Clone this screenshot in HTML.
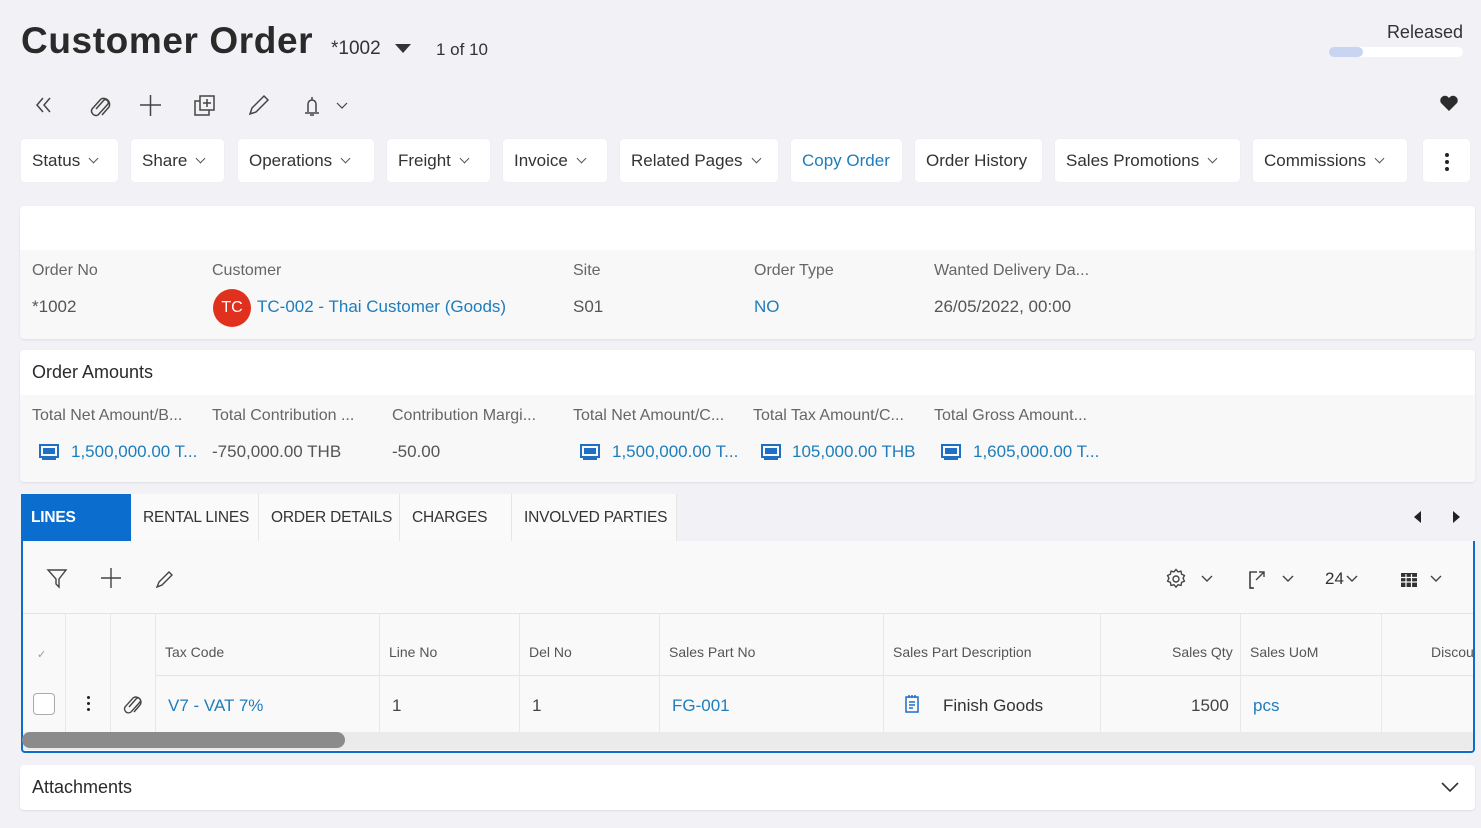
<!DOCTYPE html><html><head><meta charset="utf-8"><style>
*{box-sizing:border-box;margin:0;padding:0}
body{width:1481px;height:828px;background:#f2f1f5;font-family:"Liberation Sans",sans-serif;color:#333;position:relative;overflow:hidden;font-size:16px}
.a{position:absolute;white-space:nowrap}
.btn{position:absolute;top:139px;height:43px;background:#fff;border-radius:4px;line-height:43px;padding-left:11px;font-size:17px;color:#333;box-shadow:0 0 1px rgba(0,0,0,.08)}
.chev{display:inline-block;width:7px;height:7px;border-right:1.3px solid #555;border-bottom:1.3px solid #555;transform:rotate(45deg);margin-left:10px;position:relative;top:-4px}
.card{position:absolute;left:20px;width:1455px;background:#fff;border-radius:4px;box-shadow:0 1px 2px rgba(0,0,0,.08)}
.lbl{color:#666;font-size:16px}
.val{color:#555;font-size:17px}
.lnk{color:#1f7dbb !important;font-size:17px}
.tab{position:absolute;top:494px;height:47px;line-height:47px;font-size:15.5px;background:#fafafa;color:#333;padding-left:12px;border-right:1px solid #e6e6e6;letter-spacing:-0.2px}
.vl{position:absolute;top:614px;height:118px;width:1px;background:#e8e8e8}
.th{position:absolute;top:644px;font-size:14px;color:#555}
.td{position:absolute;top:696px;font-size:17px;color:#444}
</style></head><body>
<div class="a" style="left:21px;top:20px;font-size:37px;font-weight:bold;color:#2a2a2a;letter-spacing:0.6px">Customer Order</div>
<div class="a" style="left:331px;top:38px;font-size:19px;color:#333">*1002</div>
<div class="a" style="left:395px;top:44px;width:0;height:0;border-left:8px solid transparent;border-right:8px solid transparent;border-top:9px solid #333"></div>
<div class="a" style="left:436px;top:40px;font-size:17px;color:#333">1 of 10</div>
<div class="a" style="right:18px;top:22px;font-size:18px;color:#333">Released</div>
<div class="a" style="left:1329px;top:47px;width:134px;height:10px;background:#fff;border-radius:5px"><div style="width:34px;height:10px;background:#c8d4f2;border-radius:5px"></div></div>
<svg class="a" style="left:30px;top:90px" width="330" height="30" fill="none" stroke="#444" stroke-width="1.5">
<path d="M13 8l-6 7 6 7M20 8l-6 7 6 7"/>
<path d="M66 19l8-9a3 3 0 0 1 4 4l-10 11a4.5 4.5 0 0 1-6-6l9-10a6 6 0 0 1 8 8l-7 8"/>
<path d="M110 15h21M120.5 5v21"/>
<rect x="165" y="11" width="14" height="14"/><rect x="170" y="6" width="14" height="14" fill="#f2f1f5"/><path d="M177 9v8M173 13h8"/>
<path d="M220 24l2-6 12-12 4 4-12 12z"/>
<path d="M275 23h14M278 22v-8a4 4 0 0 1 8 0v8M282 10v-3M280 25h4"/>
<path d="M307 13l5 5 5-5" stroke-width="1.2"/>
</svg>
<svg class="a" style="left:1439px;top:94px" width="20" height="18"><path d="M10 17L2 9a4.5 4.5 0 0 1 8-5 4.5 4.5 0 0 1 8 5z" fill="#2b2b2b"/></svg>
<div class="btn" style="left:21px;width:97px">Status<span class="chev"></span></div>
<div class="btn" style="left:131px;width:93px">Share<span class="chev"></span></div>
<div class="btn" style="left:238px;width:136px">Operations<span class="chev"></span></div>
<div class="btn" style="left:387px;width:103px">Freight<span class="chev"></span></div>
<div class="btn" style="left:503px;width:104px">Invoice<span class="chev"></span></div>
<div class="btn" style="left:620px;width:158px">Related Pages<span class="chev"></span></div>
<div class="btn" style="left:791px;width:111px;color:#1f7dbb">Copy Order</div>
<div class="btn" style="left:915px;width:127px">Order History</div>
<div class="btn" style="left:1055px;width:185px">Sales Promotions<span class="chev"></span></div>
<div class="btn" style="left:1253px;width:154px">Commissions<span class="chev"></span></div>
<div class="btn" style="left:1423px;width:47px;padding:0"><div style="position:absolute;left:22px;top:14px;width:4px;height:4px;background:#222;border-radius:50%;box-shadow:0 7px 0 #222,0 14px 0 #222"></div></div>

<div class="card" style="top:206px;height:133px"><div style="position:absolute;left:0;right:0;top:44px;bottom:0;background:#f8f8f8;border-radius:0 0 4px 4px"></div></div>
<div class="a lbl" style="left:32px;top:262px">Order No</div>
<div class="a lbl" style="left:212px;top:262px">Customer</div>
<div class="a lbl" style="left:573px;top:262px">Site</div>
<div class="a lbl" style="left:754px;top:262px">Order Type</div>
<div class="a lbl" style="left:934px;top:262px">Wanted Delivery Da...</div>
<div class="a val" style="left:32px;top:297px">*1002</div>
<div class="a" style="left:213px;top:289px;width:38px;height:38px;border-radius:50%;background:#e0301e;color:#fff;font-size:16px;text-align:center;line-height:38px">TC</div>
<div class="a lnk" style="left:257px;top:297px">TC-002 - Thai Customer (Goods)</div>
<div class="a val" style="left:573px;top:297px">S01</div>
<div class="a lnk" style="left:754px;top:297px">NO</div>
<div class="a val" style="left:934px;top:297px">26/05/2022, 00:00</div>

<div class="card" style="top:350px;height:132px"><div style="position:absolute;left:0;right:0;top:45px;bottom:0;background:#f8f8f8;border-radius:0 0 4px 4px"></div></div>
<div class="a" style="left:32px;top:362px;font-size:18px;color:#2a2a2a">Order Amounts</div>
<div class="a lbl" style="left:32px;top:407px">Total Net Amount/B...</div>
<div class="a lbl" style="left:212px;top:407px">Total Contribution ...</div>
<div class="a lbl" style="left:392px;top:407px">Contribution Margi...</div>
<div class="a lbl" style="left:573px;top:407px">Total Net Amount/C...</div>
<div class="a lbl" style="left:753px;top:407px">Total Tax Amount/C...</div>
<div class="a lbl" style="left:934px;top:407px">Total Gross Amount...</div>
<svg width="0" height="0" style="position:absolute"><defs><symbol id="mon" viewBox="0 0 20 16"><rect x="1" y="1" width="18" height="12" fill="none" stroke="#1f6fc5" stroke-width="2"/><rect x="4" y="4" width="12" height="6" fill="#1f6fc5"/><rect x="3" y="14" width="14" height="2" fill="#1f6fc5"/></symbol></defs></svg>
<svg class="a" style="left:39px;top:444px" width="20" height="16"><use href="#mon"/></svg>
<div class="a lnk" style="left:71px;top:442px">1,500,000.00 T...</div>
<div class="a val" style="left:212px;top:442px">-750,000.00 THB</div>
<div class="a val" style="left:392px;top:442px">-50.00</div>
<svg class="a" style="left:580px;top:444px" width="20" height="16"><use href="#mon"/></svg>
<div class="a lnk" style="left:612px;top:442px">1,500,000.00 T...</div>
<svg class="a" style="left:761px;top:444px" width="20" height="16"><use href="#mon"/></svg>
<div class="a lnk" style="left:792px;top:442px">105,000.00 THB</div>
<svg class="a" style="left:941px;top:444px" width="20" height="16"><use href="#mon"/></svg>
<div class="a lnk" style="left:973px;top:442px">1,605,000.00 T...</div>

<div class="tab" style="left:21px;width:110px;background:#0b6ecf;color:#fff;font-weight:bold;border:none;padding-left:10px">LINES</div>
<div class="tab" style="left:131px;width:128px">RENTAL LINES</div>
<div class="tab" style="left:259px;width:141px">ORDER DETAILS</div>
<div class="tab" style="left:400px;width:112px">CHARGES</div>
<div class="tab" style="left:512px;width:165px">INVOLVED PARTIES</div>
<div class="a" style="left:1414px;top:511px;border-top:6px solid transparent;border-bottom:6px solid transparent;border-right:7px solid #222"></div>
<div class="a" style="left:1453px;top:511px;border-top:6px solid transparent;border-bottom:6px solid transparent;border-left:7px solid #222"></div>

<div class="a" style="left:21px;top:541px;width:1454px;height:212px;background:#f9f9f9;border:2px solid #0b6ecf;border-top:none;border-radius:0 0 4px 4px"></div>
<svg class="a" style="left:45px;top:565px" width="140" height="26" fill="none" stroke="#444" stroke-width="1.4">
<path d="M3 5h18l-7 9v8l-3-3v-5z"/><path d="M56 13h20M66 3v20"/><path d="M112 22l2-5 10-10 3 3-10 10z"/>
</svg>
<svg class="a" style="left:1165px;top:566px" width="290" height="26" fill="none" stroke="#444" stroke-width="1.4">
<circle cx="11" cy="13" r="3"/><path d="M11 3.5l2 2.3 3-.6.6 3 2.8 1.3-1.3 2.8 1.3 2.8-2.8 1.3-.6 3-3-.6-2 2.3-2-2.3-3 .6-.6-3-2.8-1.3 1.3-2.8-1.3-2.8 2.8-1.3.6-3 3 .6z"/>
<path d="M37 10l5 5 5-5"/>
<path d="M92 6h-7v16h3M91 14l8-8M94 6h5v5M88 22h0"/><path d="M85 6v16h4"/><path d="M118 10l5 5 5-5"/>
<path d="M182 10l5 5 5-5"/>
<rect x="236" y="7" width="16" height="14" fill="#333" stroke="none"/><path d="M236 11.5h16M236 16h16M241 8v13M246.5 8v13" stroke="#f9f9f9" stroke-width="1.2"/>
<path d="M266 10l5 5 5-5"/>
</svg>
<div class="a" style="left:1325px;top:569px;font-size:17px;color:#333">24</div>
<div class="a" style="left:23px;top:613px;width:1450px;height:1px;background:#e4e4e4"></div>
<div class="a" style="left:155px;top:675px;width:1318px;height:1px;background:#e4e4e4"></div>
<div class="vl" style="left:65px"></div><div class="vl" style="left:110px"></div><div class="vl" style="left:155px"></div><div class="vl" style="left:379px"></div><div class="vl" style="left:519px"></div><div class="vl" style="left:659px"></div><div class="vl" style="left:883px"></div><div class="vl" style="left:1100px"></div><div class="vl" style="left:1240px"></div><div class="vl" style="left:1381px"></div>
<div class="a" style="left:37px;top:648px;font-size:11px;color:#999">✓</div>
<div class="th" style="left:165px">Tax Code</div>
<div class="th" style="left:389px">Line No</div>
<div class="th" style="left:529px">Del No</div>
<div class="th" style="left:669px">Sales Part No</div>
<div class="th" style="left:893px">Sales Part Description</div>
<div class="th" style="left:1172px">Sales Qty</div>
<div class="th" style="left:1250px">Sales UoM</div>
<div class="th" style="left:1431px">Discou</div>
<div class="a" style="left:33px;top:693px;width:22px;height:22px;border:1px solid #aaa;border-radius:4px;background:#fff"></div>
<div class="a" style="left:87px;top:696px;width:3px;height:3px;background:#222;border-radius:50%;box-shadow:0 6px 0 #222,0 12px 0 #222"></div>
<svg class="a" style="left:122px;top:695px" width="24" height="22" fill="none" stroke="#444" stroke-width="1.4"><path d="M7 12l7-8a2.5 2.5 0 0 1 4 3l-9 10a4 4 0 0 1-6-5l8-9a5 5 0 0 1 7 7l-6 7"/></svg>
<div class="td lnk" style="left:168px">V7 - VAT 7%</div>
<div class="td" style="left:392px">1</div>
<div class="td" style="left:532px">1</div>
<div class="td lnk" style="left:672px">FG-001</div>
<svg class="a" style="left:904px;top:694px" width="16" height="20" fill="none" stroke="#1f6fc5" stroke-width="1.5"><rect x="2" y="3" width="12" height="15"/><path d="M5 1v3M8 1v3M11 1v3M5 8h6M5 11h6M5 14h4"/></svg>
<div class="td" style="left:943px;color:#333">Finish Goods</div>
<div class="td" style="left:1191px">1500</div>
<div class="td lnk" style="left:1253px">pcs</div>
<div class="a" style="left:23px;top:732px;width:1450px;height:18px;background:#ebebeb"></div>
<div class="a" style="left:22px;top:732px;width:323px;height:16px;background:#8b8b8b;border-radius:8px"></div>

<div class="card" style="top:765px;height:45px"></div>
<div class="a" style="left:32px;top:777px;font-size:18px;color:#2a2a2a">Attachments</div>
<svg class="a" style="left:1440px;top:780px" width="20" height="14" fill="none" stroke="#333" stroke-width="1.6"><path d="M2 3l8 8 8-8"/></svg>
</body></html>
